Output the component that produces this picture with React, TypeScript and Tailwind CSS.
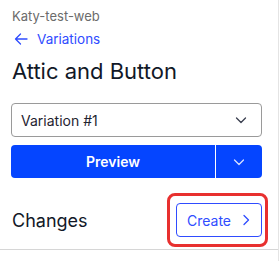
import React from 'react';

const Chevron: React.FC<{ dir?: 'down' | 'right'; className?: string }> = ({ dir = 'down', className }) => (
  <svg width="14" height="14" viewBox="0 0 14 14" fill="none" className={className}>
    {dir === 'down' ? (
      <path d="M2.5 5l4.5 4.5L11.5 5" stroke="currentColor" strokeWidth="1.3" strokeLinecap="round" strokeLinejoin="round" />
    ) : (
      <path d="M5 2.5l4.5 4.5L5 11.5" stroke="currentColor" strokeWidth="1.3" strokeLinecap="round" strokeLinejoin="round" />
    )}
  </svg>
);

const App: React.FC = () => {
  return (
    <div className="w-[280px] h-[261px] bg-white overflow-hidden font-['Inter',sans-serif]">
      <div className="w-[279px] h-full border-r border-[#e4e4e4] flex flex-col">
        {/* Header */}
        <div className="px-3 pt-[8px]">
          <p className="text-[13px] leading-[16px] text-[#6b6b6b]">Katy-test-web</p>
          <a href="#" className="mt-[5px] flex items-center gap-[8px] text-[13.5px] leading-[20px] text-[#2f4cff]">
            <svg width="16" height="16" viewBox="0 0 16 16" fill="none" className="ml-[1px]">
              <path d="M14 8H2.5M7.5 3L2.5 8l5 5" stroke="currentColor" strokeWidth="1.3" strokeLinecap="round" strokeLinejoin="round" />
            </svg>
            Variations
          </a>
          <h1 className="mt-[7px] text-[22px] leading-[30px] text-[#111827]">Attic and Button</h1>
        </div>

        {/* Variation select + preview */}
        <div className="pl-[11px] pr-[16px] mt-[17px] flex flex-col gap-[8px]">
          <button className="h-[34px] w-full flex items-center justify-between pl-[9px] pr-[13px] border border-[#9a9a9a] rounded-[4px] text-[14px] text-[#1f2330]">
            <span>Variation #1</span>
            <Chevron className="text-[#3a3f4f]" />
          </button>
          <div className="h-[33px] w-full flex rounded-[4px] overflow-hidden bg-[#0545ff] text-white">
            <button className="flex-1 text-[14px] font-semibold">Preview</button>
            <div className="w-[1px] bg-white" />
            <button className="w-[46px] flex items-center justify-center">
              <Chevron className="text-[#d8e0ff]" />
            </button>
          </div>
        </div>

        {/* Changes */}
        <div className="mt-[25px] h-[34px] pl-3 pr-[16px] flex items-center justify-between">
          <h2 className="text-[18px] text-[#111827]">Changes</h2>
          <div className="relative">
            <button className="h-[34px] w-[86px] flex items-center justify-center gap-[8px] border border-[#2f4cff] rounded-[4px] text-[14px] text-[#2f4cff]">
              Create
              <Chevron dir="right" className="-mr-[2px]" />
            </button>
            <div className="absolute -left-[9px] -top-[10px] w-[101px] h-[54px] border-[3px] border-[#e8302f] rounded-[8px] pointer-events-none" />
          </div>
        </div>
        <div className="mt-[12px] h-[1px] bg-[#d6d6d6]" />
      </div>
    </div>
  );
};

export default App;
